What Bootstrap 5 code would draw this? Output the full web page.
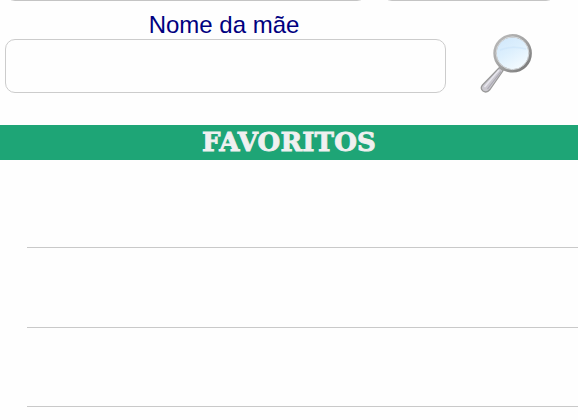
<!DOCTYPE html>
<html lang="pt-BR">
<head>
<meta charset="utf-8">
<meta name="viewport" content="width=device-width, initial-scale=1">
<title>Favoritos</title>
<link href="https://cdn.jsdelivr.net/npm/bootstrap@5.3.0/dist/css/bootstrap.min.css" rel="stylesheet">
<style>
body{background:#fefefe;font-family:"Liberation Sans",Arial,sans-serif;height:420px}
.prev-fields{height:1px;padding-left:5px}
.prev-fields .form-control,.name-field{height:54px;border:1px solid #ccc;border-radius:10px;background:#fefefe}
.prev-fields .form-control{flex:none;border-color:#c4c4c4}
.prev-a{width:362px}
.prev-b{width:174px;margin-left:15px}
.field-block{width:441px;margin-left:5px}
.field-label{color:#000080;font-size:24px;line-height:28px;height:28px;margin:10px 0 0;padding-right:3px}
.search-btn{margin:32px 0 0 33px;width:56px;height:62px}
.fav-bar{background:#1ea576;height:35px;margin-top:30px}
.fav-title{font:bold 26px/34px "DejaVu Serif",serif;color:#f0f0f0;margin:0;letter-spacing:.2px;-webkit-text-stroke:.9px #f0f0f0}
.fav-list{margin-left:27px}
.fav-item{height:79.5px;border-bottom:1px solid #c9c9c9}
.fav-item:first-child{height:88px}
</style>
</head>
<body class="overflow-hidden">
<div class="prev-fields d-flex align-items-end overflow-hidden">
  <input class="form-control prev-a" type="text" aria-label="Nome">
  <input class="form-control prev-b" type="text" aria-label="Data">
</div>
<form class="d-flex align-items-start">
  <div class="field-block">
    <label class="field-label d-block text-center" for="mae">Nome da mãe</label>
    <input class="form-control name-field" id="mae" type="text">
  </div>
  <button class="search-btn btn p-0 border-0 d-flex" type="button" aria-label="Buscar">
    <svg width="56" height="62" viewBox="479 33 56 62">
      <defs>
        <linearGradient id="lens" x1="0" y1="0" x2=".6" y2="1"><stop offset="0" stop-color="#cfe6fb"/><stop offset=".5" stop-color="#dceffd"/><stop offset="1" stop-color="#f4fbff"/></linearGradient>
        <linearGradient id="rim" x1="0" y1="0" x2="1" y2="1"><stop offset="0" stop-color="#bcbcbc"/><stop offset=".5" stop-color="#a3a3a3"/><stop offset="1" stop-color="#747474"/></linearGradient>
      </defs>
      <path d="M499.500 67.500L503.200 70.500L490 89.500Q486.500 93.500 483 91Q479.800 88.500 482.500 85Z" fill="#cbc9d0" stroke="#999" stroke-width="1.300" stroke-linejoin="round"/>
      <path d="M499 70L484.500 87" stroke="#e8e7ef" stroke-width="1.500"/>
      <path d="M501 71.500L487.500 89" stroke="#aaa8b2" stroke-width="1.200"/>
      <circle cx="512.600" cy="53.300" r="17.600" fill="url(#lens)" stroke="url(#rim)" stroke-width="3.400"/>
      <circle cx="512.500" cy="53.200" r="16.400" fill="none" stroke="#d6dadd" stroke-width="1"/>
      <path d="M500 50Q512 45 526 49" fill="none" stroke="#c8e2fa" stroke-width="1.500" opacity=".5"/>
    </svg>
  </button>
</form>
<div class="fav-bar text-center"><h1 class="fav-title">FAVORITOS</h1></div>
<div class="fav-list"><div class="fav-item"></div><div class="fav-item"></div><div class="fav-item"></div></div>
</body>
</html>
